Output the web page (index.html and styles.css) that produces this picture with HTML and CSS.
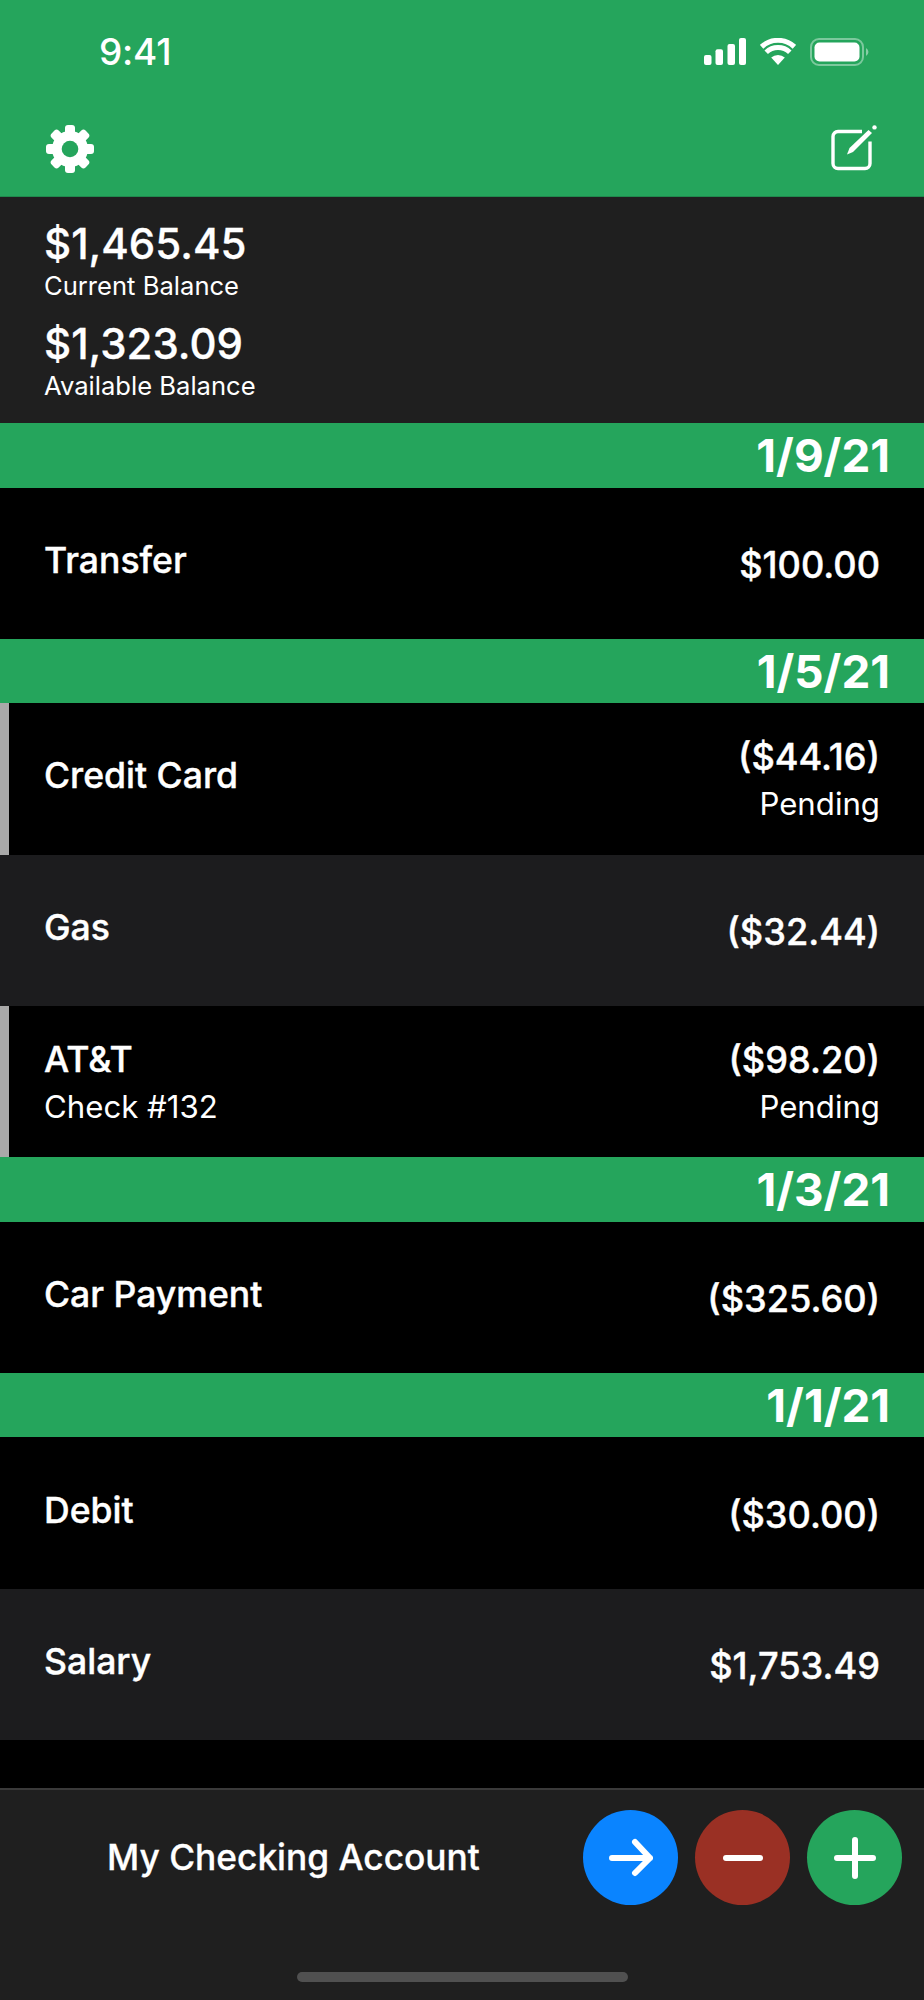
FILE: index.html
```html
<!DOCTYPE html>
<html lang="en">
<head>
    <meta charset="UTF-8">
    <meta name="viewport" content="width=device-width, initial-scale=1.0">
    <title>My Checking Account</title>
    <link rel="stylesheet" href="styles.css">
</head>
<body>
    <div class="app">
        <div class="header">
            <div class="status-bar">
                <span class="time">9:41</span>
                <div class="status-icons">
                    <svg class="signal" width="42" height="27" viewBox="0 0 42 27">
                        <rect x="0" y="17" width="7.5" height="10" rx="2"/>
                        <rect x="11.5" y="11.3" width="7.5" height="15.7" rx="2"/>
                        <rect x="23.5" y="6" width="7.5" height="21" rx="2"/>
                        <rect x="35" y="0" width="7" height="27" rx="2"/>
                    </svg>
                    <svg class="wifi" width="36" height="27" viewBox="0 0 36 27">
                        <path d="M18 27 L11.2 19.6 A10 10 0 0 1 24.8 19.6 Z"/>
                        <path class="wifi-arc" d="M6.2 14.2 A17 17 0 0 1 29.8 14.2"/>
                        <path class="wifi-arc" d="M1.6 8.8 A24 24 0 0 1 34.4 8.8"/>
                    </svg>
                    <svg class="battery" width="59" height="28" viewBox="0 0 59 28">
                        <rect class="battery-case" x="1" y="1" width="52" height="26" rx="8"/>
                        <rect x="4.5" y="4.5" width="45" height="19" rx="5"/>
                        <path class="battery-nub" d="M56 10 A4.5 4.5 0 0 1 56 18 Z"/>
                    </svg>
                </div>
            </div>
            <div class="nav-bar">
                <svg class="gear" width="48" height="48" viewBox="0 0 48 48">
                    <g>
                        <rect x="19" y="0" width="10" height="48" rx="3"/>
                        <rect x="19" y="0" width="10" height="48" rx="3" transform="rotate(45 24 24)"/>
                        <rect x="19" y="0" width="10" height="48" rx="3" transform="rotate(90 24 24)"/>
                        <rect x="19" y="0" width="10" height="48" rx="3" transform="rotate(135 24 24)"/>
                    </g>
                    <circle cx="24" cy="24" r="18"/>
                    <circle class="gear-hole" cx="24" cy="24" r="8.3"/>
                </svg>
                <svg class="compose" width="46" height="46" viewBox="0 0 46 46">
                    <path class="compose-box" d="M31 6.5 H7 A5 5 0 0 0 2 11.5 V38.5 A5 5 0 0 0 7 43.5 H34 A5 5 0 0 0 39 38.5 V16.5"/>
                    <path class="compose-pen" d="M16 29.5 L18.5 23 L37.5 5 L41 8 L22 27 Z"/>
                    <circle class="compose-tip" cx="43.5" cy="2.4" r="2.2"/>
                </svg>
            </div>
        </div>

        <div class="balances">
            <div class="balance">
                <div class="balance-amount">$1,465.45</div>
                <div class="balance-label">Current Balance</div>
            </div>
            <div class="balance">
                <div class="balance-amount">$1,323.09</div>
                <div class="balance-label">Available Balance</div>
            </div>
        </div>

        <div class="list">
            <div class="date">1/9/21</div>
            <div class="row">
                <div class="col"><div class="name">Transfer</div></div>
                <div class="col right"><div class="amount">$100.00</div></div>
            </div>

            <div class="date">1/5/21</div>
            <div class="row pending">
                <div class="col"><div class="name">Credit Card</div></div>
                <div class="col right"><div class="amount">($44.16)</div><div class="sub">Pending</div></div>
            </div>
            <div class="row alt">
                <div class="col"><div class="name">Gas</div></div>
                <div class="col right"><div class="amount">($32.44)</div></div>
            </div>
            <div class="row pending">
                <div class="col"><div class="name">AT&amp;T</div><div class="sub">Check #132</div></div>
                <div class="col right"><div class="amount">($98.20)</div><div class="sub">Pending</div></div>
            </div>

            <div class="date">1/3/21</div>
            <div class="row">
                <div class="col"><div class="name">Car Payment</div></div>
                <div class="col right"><div class="amount">($325.60)</div></div>
            </div>

            <div class="date">1/1/21</div>
            <div class="row">
                <div class="col"><div class="name">Debit</div></div>
                <div class="col right"><div class="amount">($30.00)</div></div>
            </div>
            <div class="row alt">
                <div class="col"><div class="name">Salary</div></div>
                <div class="col right"><div class="amount">$1,753.49</div></div>
            </div>
        </div>

        <div class="footer">
            <div class="account-name">My Checking Account</div>
            <div class="actions">
                <div class="action blue">
                    <svg width="44" height="44" viewBox="0 0 44 44"><path d="M3 22 H41 M26 6 L41 22 L26 37"/></svg>
                </div>
                <div class="action red">
                    <svg width="44" height="44" viewBox="0 0 44 44"><path d="M5 22 H39"/></svg>
                </div>
                <div class="action green">
                    <svg width="44" height="44" viewBox="0 0 44 44"><path d="M4 22 H40 M22 4 V40"/></svg>
                </div>
            </div>
            <div class="home-indicator"></div>
        </div>
    </div>
</body>
</html>
```

FILE: styles.css
```css
body {
    margin: 0;
    background: #000;
    color: #fff;
    font-family: Inter, "Noto Sans", sans-serif;
}
.app {
    width: 924px;
    height: 2000px;
    display: flex;
    flex-direction: column;
    overflow: hidden;
}

/* header */
.header {
    height: 197px;
    box-sizing: border-box;
    background: #25a55c;
    border-bottom: 1px solid #20894d;
}
.status-bar {
    height: 105px;
    box-sizing: border-box;
    padding: 38px 55px 0 99px;
    display: flex;
    justify-content: space-between;
    align-items: flex-start;
}
.time {
    font-size: 37px;
    font-weight: 500;
    line-height: 28px;
    letter-spacing: -0.2px;
}
.status-icons {
    display: flex;
    gap: 14px;
    align-items: flex-start;
}
.status-icons svg {
    display: block;
    fill: #fff;
}
.wifi-arc {
    fill: none;
    stroke: #fff;
    stroke-width: 5;
}
.battery-case {
    fill: none;
    stroke: rgba(255, 255, 255, 0.4);
    stroke-width: 2;
}
.battery-nub {
    opacity: 0.45;
}
.nav-bar {
    padding: 20px 47px 0 46px;
    display: flex;
    justify-content: space-between;
    align-items: flex-start;
}
.gear {
    fill: #fff;
    display: block;
}
.gear-hole {
    fill: #25a55c;
}
.compose {
    display: block;
    fill: #fff;
}
.compose-box {
    fill: none;
    stroke: #fff;
    stroke-width: 3.4;
}

/* balances */
.balances {
    height: 226px;
    box-sizing: border-box;
    padding: 21px 44px 0;
    background: #1f1f1f;
}
.balance {
    margin-bottom: 15.5px;
}
.balance-amount {
    font-size: 42px;
    line-height: 52px;
    font-weight: 500;
    -webkit-text-stroke: 0.3px #fff;
}
.balance-label {
    font-size: 25.6px;
    line-height: 32px;
}

/* transactions */
.list {
    flex: 1;
    background: #000;
}
.date {
    height: 64.5px;
    line-height: 66px;
    padding-right: 34px;
    text-align: right;
    background: #25a55c;
    font-size: 45.8px;
    font-weight: 700;
}
.row {
    height: 151.3px;
    box-sizing: border-box;
    padding: 0 44px 0 44px;
    display: flex;
    justify-content: space-between;
    align-items: center;
    background: #000;
}
.row.alt {
    background: #1c1c1e;
}
.row.pending {
    border-left: 9px solid #a9a9a9;
    padding-left: 35px;
}
.right {
    text-align: right;
}
.name {
    font-size: 35.6px;
    line-height: 46px;
    font-weight: 500;
    -webkit-text-stroke: 0.4px #fff;
}
.amount {
    font-size: 36.2px;
    line-height: 46px;
    font-weight: 500;
    -webkit-text-stroke: 0.4px #fff;
}
/* lone lines sit a little off centre, stacked ones a little low */
.name:only-child {
    margin-bottom: 5px;
}
.amount:only-child {
    margin-top: 3px;
}
.name:not(:only-child), .amount:not(:only-child) {
    margin-top: 5px;
}
.sub {
    font-size: 31.2px;
    line-height: 48px;
}

/* bottom bar */
.footer {
    position: relative;
    height: 212px;
    box-sizing: border-box;
    padding: 20px 22px 0 107px;
    border-top: 2px solid #3a3a3a;
    background: #1f1f1f;
    display: flex;
    justify-content: space-between;
    align-items: flex-start;
}
.account-name {
    font-size: 35.3px;
    line-height: 95px;
    font-weight: 500;
    -webkit-text-stroke: 0.3px #fff;
}
.actions {
    display: flex;
    gap: 17px;
}
.action {
    width: 95px;
    height: 95px;
    border-radius: 50%;
    display: flex;
    align-items: center;
    justify-content: center;
}
.action svg {
    display: block;
    fill: none;
    stroke: #fff;
    stroke-width: 6;
    stroke-linecap: round;
    stroke-linejoin: round;
}
.blue { background: #0a84ff; }
.red { background: #9a3024; }
.green { background: #25a55c; }
.home-indicator {
    position: absolute;
    left: 297px;
    right: 296px;
    bottom: 18px;
    height: 10px;
    border-radius: 5px;
    background: #505050;
}
```
